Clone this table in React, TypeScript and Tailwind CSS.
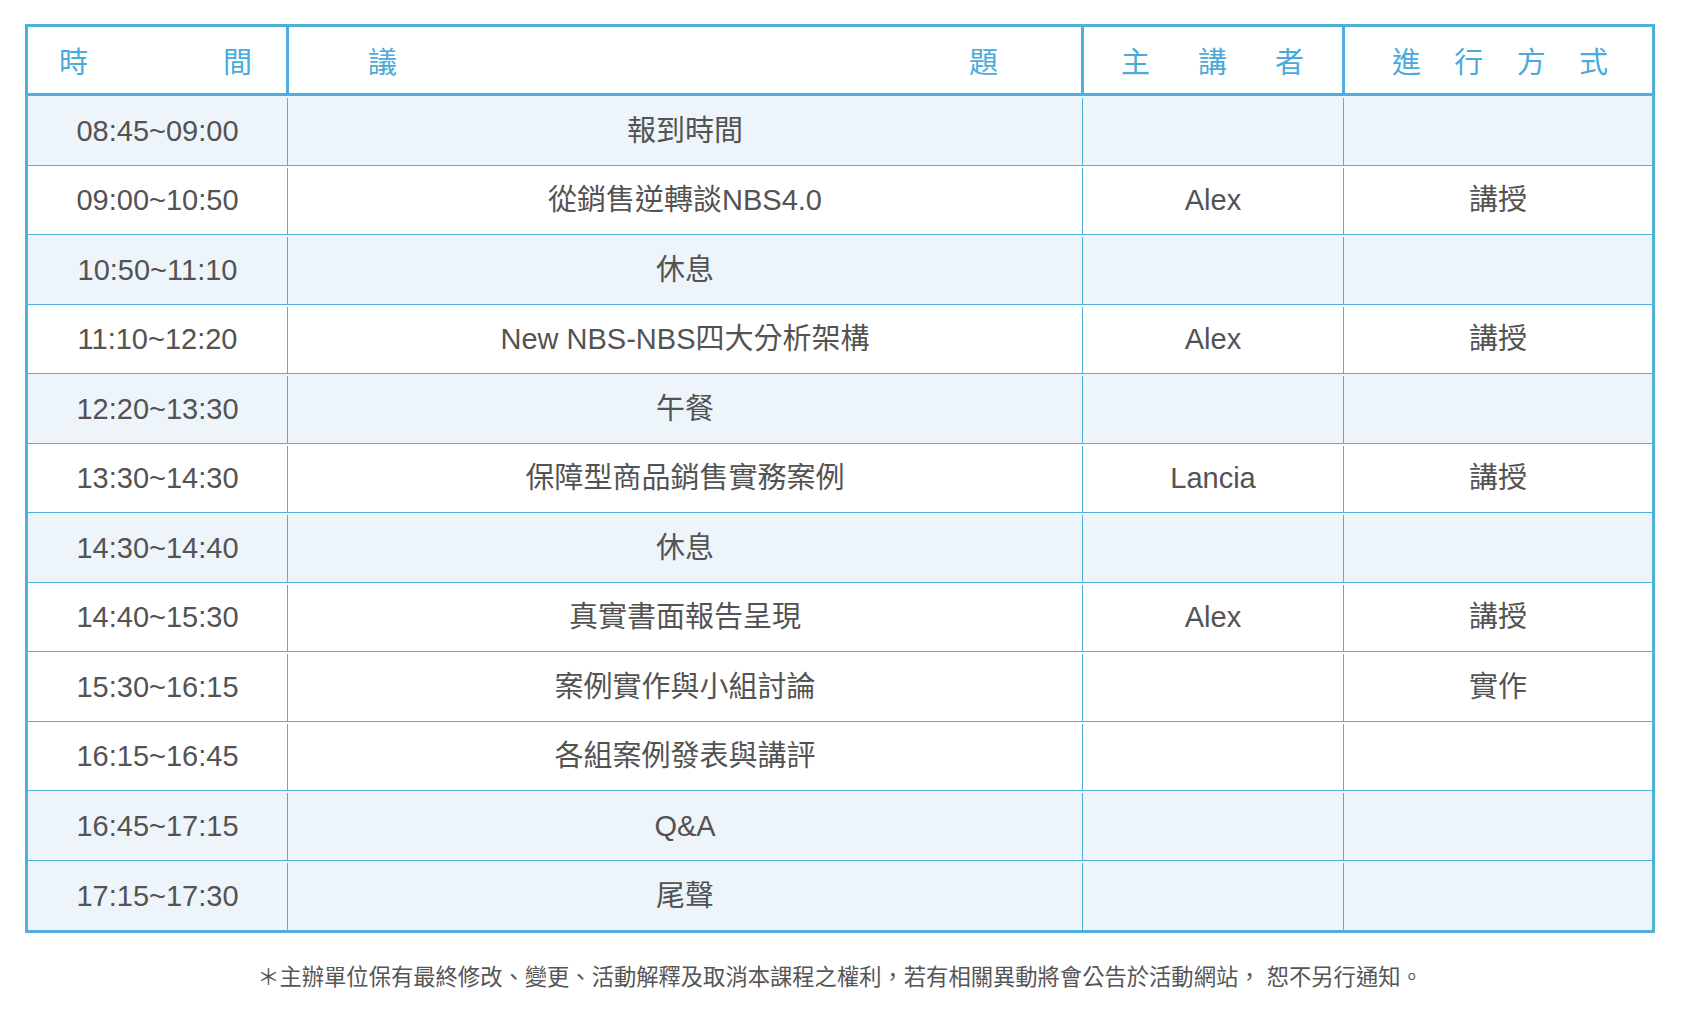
const FONT = "font-['Liberation_Sans','Noto_Sans_CJK_TC',sans-serif]";

type Row = { time: string; topic: string; speaker?: string; mode?: string; shaded: boolean };

const ROWS: Row[] = [
  { time: '08:45~09:00', topic: '報到時間', shaded: true },
  { time: '09:00~10:50', topic: '從銷售逆轉談NBS4.0', speaker: 'Alex', mode: '講授', shaded: false },
  { time: '10:50~11:10', topic: '休息', shaded: true },
  { time: '11:10~12:20', topic: 'New NBS-NBS四大分析架構', speaker: 'Alex', mode: '講授', shaded: false },
  { time: '12:20~13:30', topic: '午餐', shaded: true },
  { time: '13:30~14:30', topic: '保障型商品銷售實務案例', speaker: 'Lancia', mode: '講授', shaded: false },
  { time: '14:30~14:40', topic: '休息', shaded: true },
  { time: '14:40~15:30', topic: '真實書面報告呈現', speaker: 'Alex', mode: '講授', shaded: false },
  { time: '15:30~16:15', topic: '案例實作與小組討論', mode: '實作', shaded: false },
  { time: '16:15~16:45', topic: '各組案例發表與講評', shaded: false },
  { time: '16:45~17:15', topic: 'Q&A', shaded: true },
  { time: '17:15~17:30', topic: '尾聲', shaded: true },
];

function HeaderCell({ chars, className }: { chars: string[]; className: string }) {
  return (
    <div className={`flex items-center justify-between h-full pt-[7px] ${className}`}>
      {chars.map((c) => (
        <span key={c}>{c}</span>
      ))}
    </div>
  );
}

export default function App() {
  return (
    <div className={`w-[1686px] h-[1016px] bg-white pt-[24px] pl-[25px] ${FONT}`}>
      <div className="w-[1630px] border-[3px] border-[#4fb0dc]">
        <div className="flex h-[69px] border-b-[3px] border-[#4fb0dc] text-[29px] text-[#4aaadb] bg-white">
          <HeaderCell chars={['時', '間']} className="w-[261px] border-r-[3px] border-[#4fb0dc] pl-[31px] pr-[34px]" />
          <HeaderCell chars={['議', '題']} className="w-[795px] border-r-[3px] border-[#4fb0dc] pl-[79px] pr-[83px]" />
          <HeaderCell chars={['主', '講', '者']} className="w-[261px] border-r-[3px] border-[#4fb0dc] pl-[37px] pr-[38px]" />
          <HeaderCell chars={['進', '行', '方', '式']} className="flex-1 pl-[47px] pr-[44px]" />
        </div>
        {ROWS.map((r, i) => (
          <div
            key={r.time}
            className={`flex h-[69.5px] pt-[2px] text-[29px] text-[#535353] ${r.shaded ? 'bg-[#edf5fb]' : 'bg-white'} ${
              i < ROWS.length - 1 ? 'border-b border-[#4fb0dc]' : ''
            }`}
          >
            <div className="w-[260px] border-r border-[#4fb0dc] flex items-center justify-center">{r.time}</div>
            <div className="w-[795px] border-r border-[#4fb0dc] flex items-center justify-center">{r.topic}</div>
            <div className="w-[261px] border-r border-[#4fb0dc] flex items-center justify-center">{r.speaker}</div>
            <div className="flex-1 flex items-center justify-center">{r.mode}</div>
          </div>
        ))}
      </div>
      <p className="w-[1630px] mt-[28px] text-center text-[22.3px] text-[#555555]">
        ＊主辦單位保有最終修改、變更、活動解釋及取消本課程之權利，若有相關異動將會公告於活動網站， 恕不另行通知。
      </p>
    </div>
  );
}
